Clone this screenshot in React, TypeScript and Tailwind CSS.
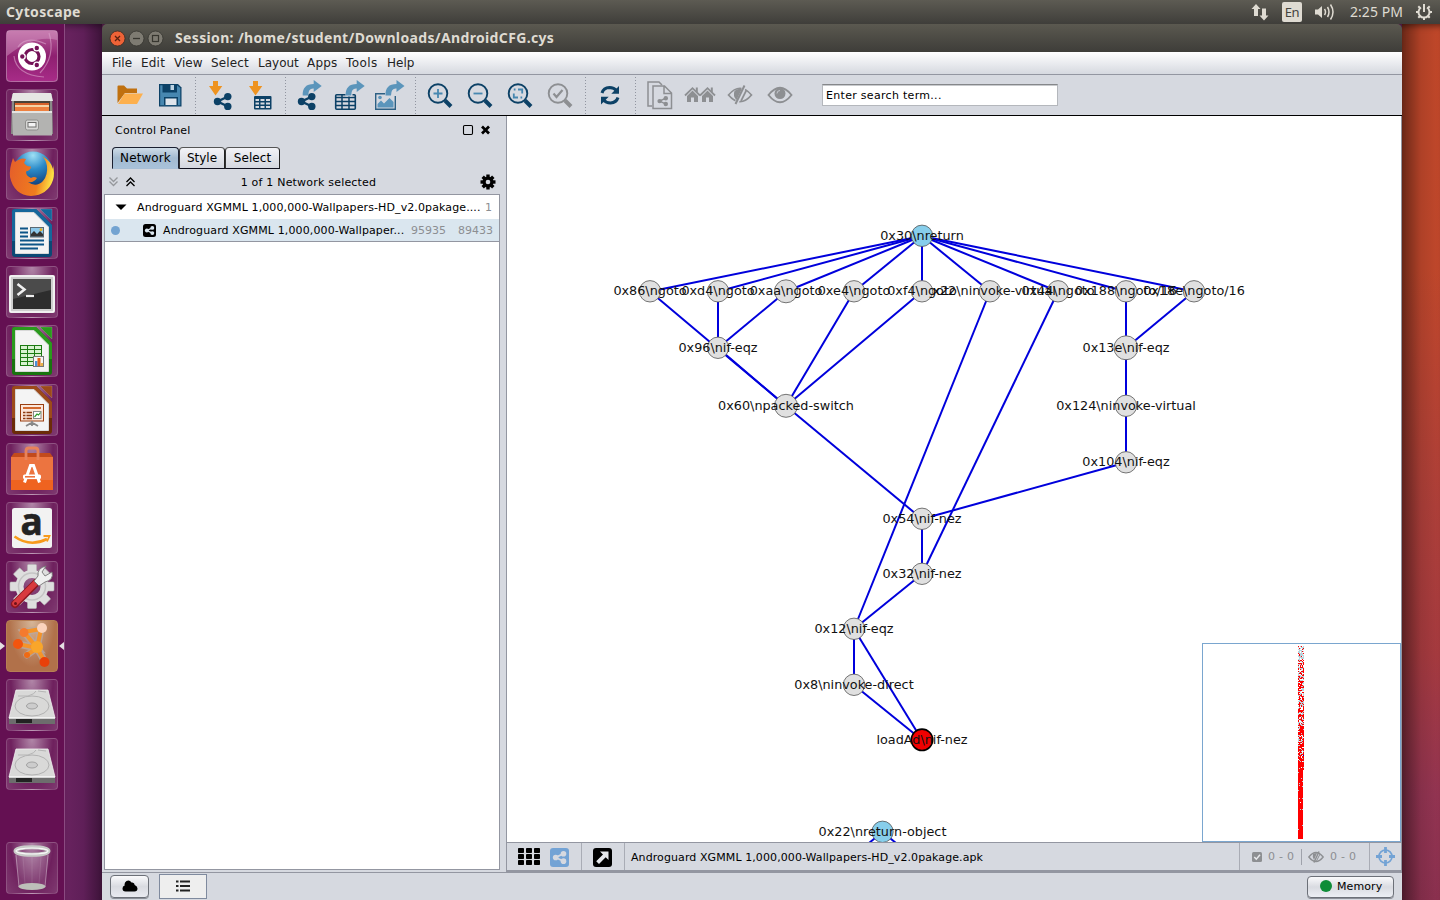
import React from "react";

type Kids = { children?: React.ReactNode };

/* ---------- launcher ---------- */

function Tile({ children, active }: Kids & { active?: boolean }) {
  return (
    <div
      className={
        active
          ? "relative h-[52px] w-[52px] shrink-0 rounded-[4px] border border-[#b67f55] bg-[radial-gradient(ellipse_at_50%_0%,#d6b698_0%,#b1714a_65%)]"
          : "relative h-[52px] w-[52px] shrink-0 rounded-[4px] border border-white/15 bg-[radial-gradient(ellipse_at_50%_0%,rgba(255,255,255,0.5)_0%,rgba(255,255,255,0.07)_60%,rgba(255,255,255,0.18)_100%)]"
      }
    >
      <svg className="absolute -left-px -top-px h-[52px] w-[52px]" viewBox="0 0 52 52">
        {children}
      </svg>
    </div>
  );
}

function UbuntuIcon() {
  return (
    <>
      <defs>
        <linearGradient id="ubg" x1="0" x2="0" y1="0" y2="1">
          <stop offset="0" stopColor="#b9609c" />
          <stop offset="0.5" stopColor="#8e1f70" />
          <stop offset="1" stopColor="#a82c88" />
        </linearGradient>
      </defs>
      <rect x="0.5" y="0.5" width="51" height="51" rx="4" fill="url(#ubg)" stroke="#c58ab5" strokeOpacity="0.6" />
      <path d="M1 1H51V10Q28 4 1 26Z" fill="#dfa9cf" opacity="0.4" />
      <path d="M43 3Q50 26 34 43M8 26Q10 45 38 47M12 17Q20 5 40 14" fill="none" stroke="#dba4cc" strokeWidth="1.2" opacity="0.6" />
      <circle cx="26" cy="26.500" r="14" fill="#fff" />
      <circle cx="26" cy="26.500" r="7" fill="none" stroke="#741157" strokeWidth="3.200" />
      <g stroke="#fff" strokeWidth="1.400" fill="#741157">
        <circle cx="16.300" cy="26.500" r="2.900" />
        <circle cx="30.800" cy="18" r="2.900" />
        <circle cx="30.800" cy="35" r="2.900" />
      </g>
    </>
  );
}

function FilesIcon() {
  return (
    <>
      <path d="M6 5H46L47 45H5Z" fill="#8a8a88" />
      <path d="M7 4H45L47 12H5Z" fill="#e6e6e4" />
      <rect x="8" y="12" width="36" height="10" fill="#4a4238" />
      <rect x="9" y="14" width="34" height="2" fill="#d8612a" />
      <rect x="9" y="16" width="34" height="2" fill="#f6d3a6" />
      <rect x="9" y="18" width="34" height="4" fill="#ee8140" />
      <path d="M6 22H46V46.500H7Z" fill="#b3b3b1" />
      <path d="M6 22H46V24H6Z" fill="#e4e4e2" />
      <rect x="19.500" y="31" width="13" height="10" rx="2" fill="#d8d8d6" stroke="#8e8e8c" />
      <rect x="22" y="33.500" width="8" height="4.500" fill="#f3f3f3" stroke="#6e6e6c" />
    </>
  );
}

function FirefoxIcon() {
  return (
    <>
      <defs>
        <radialGradient id="ffg" cx="0.5" cy="0.1" r="0.9">
          <stop offset="0" stopColor="#9fe0f5" />
          <stop offset="0.4" stopColor="#2b8bc9" />
          <stop offset="1" stopColor="#0a2a66" />
        </radialGradient>
        <linearGradient id="fft" x1="0" x2="1" y1="0.4" y2="0.6">
          <stop offset="0" stopColor="#e5602a" />
          <stop offset="0.65" stopColor="#f07d1e" />
          <stop offset="1" stopColor="#fff04a" />
        </linearGradient>
      </defs>
      <circle cx="27" cy="23" r="19.500" fill="url(#ffg)" />
      <path d="M7 10L9 14Q15 9 20 11L18 15Q21 19 25 18.500Q25 22 20 23.500Q20 28 25 30Q28 28 31 30Q28 35 22 34Q30 40 37 33Q42 27 41 18Q40 12 36 8Q45 13 47 21L47 17Q49 26 47 32Q42 47 25 48Q8 47 4 29Q3 21 7 10Z" fill="url(#fft)" />
    </>
  );
}

function DocIcon({ c, d, kind }: { c: string; d: string; kind: "text" | "calc" | "show" }) {
  return (
    <>
      <path d="M9 2H30L46 18V47Q46 50 43 50H9Q6 50 6 47V5Q6 2 9 2Z" fill={d} />
      <path d="M9 2H30L46 18V34H6V5Q6 2 9 2Z" fill={c} />
      <path d="M34 2H46V14Z" fill={c} stroke="#fff" strokeOpacity="0.25" strokeWidth="0.6" />
      <path d="M9.500 5.500H28L42.500 20V46.500H9.500Z" fill="#f4f4f4" stroke="#d8d8d8" />
      {kind === "text" && (
        <>
          <path d="M14 21.500H22M14 25.500H22M14 29.500H22M14 33.500H38M14 37.500H38M14 41.500H32" stroke="#0d5487" strokeWidth="1.800" />
          <rect x="24.500" y="20.500" width="13" height="9.500" fill="#8cc8ea" stroke="#5a6a74" />
          <path d="M25 29.500V27L28 24L31 27L34 24L37 27V29.500Z" fill="#333" />
          <circle cx="35" cy="22.700" r="1.400" fill="#e8b01c" />
        </>
      )}
      {kind === "calc" && (
        <>
          <rect x="14.500" y="20.500" width="21" height="20" fill="#d8f2d0" stroke="#1c7a12" />
          <path d="M14 24.500H36M14 28.500H36M14 32.500H36M14 36.500H36M21.500 20V41M28.500 20V41" stroke="#1c7a12" />
          <rect x="27.500" y="31.500" width="10" height="10" fill="#f6f6f6" stroke="#777" />
          <path d="M29 41V36H31.500V41Z" fill="#4a90d9" />
          <path d="M31.500 41V33H34.500V41Z" fill="#e2661a" />
          <path d="M34.500 41V38H37V41Z" fill="#eab04a" />
        </>
      )}
      {kind === "show" && (
        <>
          <rect x="14.500" y="20.500" width="23" height="16.500" fill="#fbe6da" stroke="#9a3e10" />
          <path d="M17 24H35" stroke="#d2692f" strokeWidth="2" />
          <path d="M17 28.500H26M17 31.500H26M17 34.500H26" stroke="#8c3a10" strokeWidth="1.600" strokeDasharray="2.500 1 10" />
          <rect x="27.500" y="27.500" width="7.500" height="7" fill="#fff" stroke="#888" />
          <path d="M28.500 33L31 30L32.500 31L34.500 28.500" fill="none" stroke="#2f9a2f" strokeWidth="1.200" />
          <path d="M20 42L26 38.500L32 42M26 37V42" fill="none" stroke="#888" strokeWidth="1.800" />
        </>
      )}
    </>
  );
}

function TerminalIcon() {
  return (
    <>
      <rect x="3" y="9" width="46" height="38" rx="2" fill="#cfcfcf" />
      <rect x="4" y="10" width="44" height="36" rx="1.500" fill="none" stroke="#fbfbfb" strokeWidth="1.500" />
      <rect x="7" y="13" width="38" height="30" fill="#2d2d2d" />
      <path d="M7 13H45V24L7 33Z" fill="#4b4b4b" />
      <path d="M11.500 18L18.500 23.500L11.500 29" fill="none" stroke="#efefef" strokeWidth="2.500" />
      <path d="M20 30H28" stroke="#efefef" strokeWidth="2.200" />
    </>
  );
}

function SoftwareIcon() {
  return (
    <>
      <path d="M5 14L8 10H44L47 14V20H5Z" fill="#c24a1c" />
      <rect x="5" y="14" width="42" height="33" fill="#ec7440" />
      <rect x="5" y="37" width="42" height="10" fill="#ef6320" />
      <path d="M20 17V8Q20 5 23 5H29Q32 5 32 8V17" fill="none" stroke="#e8825a" strokeWidth="2.800" />
      <path d="M18.500 39.500L24.500 22.500H27.500L33.500 39.500" fill="none" stroke="#fff" strokeWidth="3" />
      <rect x="17" y="31.500" width="18" height="4.500" rx="1.500" fill="#fff" />
      <path d="M19 33.800H29" stroke="#ec6b34" strokeWidth="1.500" />
    </>
  );
}

function AmazonIcon() {
  return (
    <>
      <rect x="6" y="6" width="40" height="40" rx="2.500" fill="#f2f2f2" />
      <text x="25.700" y="33" textAnchor="middle" className="font-['Open_Sans',sans-serif] text-[37px] font-bold" fill="#222" stroke="#222" strokeWidth="0.600">
        a
      </text>
      <path d="M8.500 34.500Q24 45.500 41 37" fill="none" stroke="#f79a1c" strokeWidth="2.600" />
      <path d="M37.500 34L43.500 34L41 39.500" fill="none" stroke="#f79a1c" strokeWidth="1.800" />
    </>
  );
}

function SettingsIcon() {
  return (
    <>
      <g fill="#dedede" stroke="#b6b6b6" strokeWidth="0.600">
        {[0, 45, 90, 135, 180, 225, 270, 315].map((a) => (
          <rect key={a} x="21.500" y="3.500" width="9" height="12" rx="1" transform={`rotate(${a} 26 25.500)`} />
        ))}
      </g>
      <circle cx="26" cy="25.500" r="12.500" fill="none" stroke="#dedede" strokeWidth="8" />
      <circle cx="26" cy="25.500" r="13.500" fill="none" stroke="#c4c4c4" strokeWidth="1.500" />
      <path d="M9 43L30 22" stroke="#8e1620" strokeWidth="8" strokeLinecap="round" />
      <path d="M9 42.500L29.500 22" stroke="#d83a3e" strokeWidth="5.500" strokeLinecap="round" />
      <path d="M28 20L32 15Q31 7 40 5L36 11L39 15L46 11Q48 19 39 21L33 25Z" fill="#efefef" stroke="#777" strokeWidth="0.900" />
      <circle cx="9.500" cy="42.500" r="1.500" fill="#6d1018" />
    </>
  );
}

function CytoscapeIcon() {
  return (
    <>
      <g stroke="#b9a8a0" strokeOpacity="0.8" strokeWidth="7" fill="none" strokeLinecap="round">
        <path d="M12 24L31 28L18 12L35 9L31 28L39 42M31 28L21 35" />
      </g>
      <g stroke="#f4942a" strokeWidth="4" fill="none" strokeLinecap="round">
        <path d="M12 24L31 28L18 12L35 9L31 28L39 42M31 28L21 35" />
      </g>
      <circle cx="36" cy="8" r="5" fill="#fbd3bd" />
      <circle cx="18" cy="12.500" r="4.500" fill="#f47a2e" />
      <circle cx="12" cy="24" r="5" fill="#f2550f" />
      <circle cx="31" cy="27" r="6" fill="#f9a62a" />
      <circle cx="21" cy="35" r="3" fill="#ef6a14" />
      <circle cx="38.500" cy="42" r="5" fill="#e8400a" />
    </>
  );
}

function DiskIcon() {
  return (
    <>
      <path d="M10 11H42L49 39H3Z" fill="#d9d9d8" stroke="#f2f2f2" strokeWidth="0.800" />
      <path d="M3 39H49V45H3Z" fill="#6d6d6d" />
      <path d="M10 40H26V44H10Z" fill="#222" />
      <path d="M3 39H49" stroke="#f6f6f6" strokeWidth="1.500" />
      <ellipse cx="26" cy="27" rx="17" ry="10" fill="none" stroke="#b2b2b2" />
      <ellipse cx="26" cy="27" rx="5.500" ry="3" fill="#ccc" stroke="#a2a2a2" />
      <path d="M12 17L22 17Q29 15 30 12M32 12L40 13" fill="none" stroke="#b5b5b5" />
    </>
  );
}

function TrashIcon() {
  return (
    <>
      <path d="M9 11L13 46H39L43 11Z" fill="#fff" fillOpacity="0.12" />
      <path d="M10 13L13 45M42 13L39 45" stroke="#fff" strokeOpacity="0.35" />
      <path d="M17 15L19 42M35 15L33 42M26 15V42" stroke="#fff" strokeOpacity="0.1" />
      <ellipse cx="26" cy="44.500" rx="13.500" ry="3.500" fill="#bdbfb9" />
      <ellipse cx="26" cy="9" rx="16.500" ry="3.800" fill="none" stroke="#c9cbc8" strokeWidth="4" />
      <ellipse cx="26" cy="9" rx="16" ry="3" fill="none" stroke="#f8f8f8" strokeWidth="1.200" />
    </>
  );
}

function Launcher() {
  return (
    <aside className="relative flex w-[65px] shrink-0 flex-col items-start gap-[7px] border-r border-[#8b4b81] bg-[#641052] pl-[6px] pt-[6px]">
      <Tile><UbuntuIcon /></Tile>
      <Tile><FilesIcon /></Tile>
      <Tile><FirefoxIcon /></Tile>
      <Tile><DocIcon c="#15679b" d="#0b4874" kind="text" /></Tile>
      <Tile><TerminalIcon /></Tile>
      <Tile><DocIcon c="#2a9a1d" d="#18740f" kind="calc" /></Tile>
      <Tile><DocIcon c="#9c4a1a" d="#6b2b08" kind="show" /></Tile>
      <Tile><SoftwareIcon /></Tile>
      <Tile><AmazonIcon /></Tile>
      <Tile><SettingsIcon /></Tile>
      <Tile active><CytoscapeIcon /></Tile>
      <Tile><DiskIcon /></Tile>
      <Tile><DiskIcon /></Tile>
      <div className="mt-[45px]">
        <Tile><TrashIcon /></Tile>
      </div>
      <svg className="absolute left-0 top-[616px] h-[12px] w-[64px]" viewBox="0 0 64 12">
        <path d="M0 2L5 6L0 10ZM64 2L59 6L64 10Z" fill="#e4dfe2" />
      </svg>
    </aside>
  );
}

/* ---------- top bar ---------- */

function TopBar() {
  return (
    <header className="flex h-6 items-center justify-between bg-gradient-to-b from-[#5d5b53] to-[#3f3e3a] pl-[6px] pr-[7px] font-['Noto_Sans','Open_Sans',sans-serif] text-[#dfdbd2]">
      <span className="text-[14px] font-bold leading-6 tracking-[0.35px]">Cytoscape</span>
      <div className="flex items-center">
        <svg className="h-[18px] w-[18px]" viewBox="0 0 18 18" fill="#dfdbd2">
          <path d="M5 1L9.500 6H7V13H3V6H0.500ZM13 17.500L8.500 12.500H11V5.500H15V12.500H17.500Z" />
        </svg>
        <span className="ml-[13px] flex h-5 w-5 items-center justify-center rounded-[2px] bg-[#dfdbd2] text-[13px] leading-5 tracking-[-0.4px] text-[#45443f]">En</span>
        <svg className="ml-[12px] h-[18px] w-[22px]" viewBox="0 0 22 18">
          <path d="M1 6.500H4L8 3V15L4 11.500H1Z" fill="#dfdbd2" />
          <path d="M10.500 6Q12.500 9 10.500 12M13.500 4Q16.500 9 13.500 14M16.500 1.500Q21.500 9 16.500 16.500" fill="none" stroke="#dfdbd2" strokeWidth="1.500" />
        </svg>
        <span className="ml-[14px] w-[54px] whitespace-nowrap text-[14px] leading-6 tracking-[0.05px]">2:25 PM</span>
        <svg className="ml-[11px] h-[18px] w-[18px]" viewBox="0 0 18 18" fill="none" stroke="#dfdbd2">
          <path d="M6 4.500A5.500 5.500 0 1 0 12 4.500" strokeWidth="2" />
          <path d="M9 1V9" strokeWidth="2" />
          <path d="M1 9H3.500M14.500 9H17M9 14.500V17M3.300 3.300L5 5M14.700 3.300L13 5M3.300 14.700L5 13M14.700 14.700L13 13" strokeWidth="2" />
        </svg>
      </div>
    </header>
  );
}

/* ---------- window chrome ---------- */

function TitleBar() {
  return (
    <div className="flex h-7 items-center rounded-t-[5px] bg-gradient-to-b from-[#5b5950] to-[#3e3d39] pl-[7px]">
      <svg className="h-[18px] w-[56px]" viewBox="0 0 56 18">
        <circle cx="8.500" cy="9.500" r="7.500" fill="#ee6337" stroke="#3a2a22" strokeWidth="0.800" />
        <path d="M6 7L11 12M11 7L6 12" stroke="#5a2110" strokeWidth="1.300" />
        <circle cx="27.500" cy="9.500" r="7.500" fill="#7e7b72" stroke="#35342f" strokeWidth="0.800" />
        <path d="M24 9.500H31" stroke="#37362f" strokeWidth="1.300" />
        <circle cx="46.500" cy="9.500" r="7.500" fill="#7e7b72" stroke="#35342f" strokeWidth="0.800" />
        <rect x="43.500" y="6.500" width="6" height="6" fill="none" stroke="#37362f" strokeWidth="1.200" />
      </svg>
      <span className="ml-[10px] whitespace-nowrap font-['Noto_Sans','Open_Sans',sans-serif] text-[14px] font-bold leading-7 tracking-[0.35px] text-[#dfdbd2]">
        Session: /home/student/Downloads/AndroidCFG.cys
      </span>
    </div>
  );
}

function MenuBar() {
  return (
    <nav className="flex h-[23px] items-center border-b border-[#9396a1] bg-gradient-to-b from-white to-[#d6d9e0] pl-[10px] text-[12px] leading-[22px] text-[#222]">
      <span className="w-[29px]">File</span>
      <span className="w-[33px] tracking-[0.200px]">Edit</span>
      <span className="w-[37px]">View</span>
      <span className="w-[47px] tracking-[0.150px]">Select</span>
      <span className="w-[49px]">Layout</span>
      <span className="w-[39px] tracking-[0.200px]">Apps</span>
      <span className="w-[41px] tracking-[0.450px]">Tools</span>
      <span>Help</span>
    </nav>
  );
}

function Tool({ children }: Kids) {
  return (
    <svg className="h-10 w-10 shrink-0" viewBox="0 0 40 40">
      {children}
    </svg>
  );
}

function Sep() {
  return (
    <svg className="h-10 w-[10px] shrink-0" viewBox="0 0 10 40">
      <path d="M5.500 2V39" stroke="#9195a0" strokeDasharray="1 2" />
    </svg>
  );
}

function ShareShape({ x, y, s = 1, c }: { x: number; y: number; s?: number; c: string }) {
  return (
    <g transform={`translate(${x} ${y}) scale(${s})`} fill={c} stroke={c}>
      <path d="M14 3.500L3.500 8.500L14 13.500" fill="none" strokeWidth="2.400" />
      <circle cx="3.500" cy="8.500" r="3.700" strokeWidth="0" />
      <circle cx="13.800" cy="3.600" r="3.700" strokeWidth="0" />
      <circle cx="13.800" cy="13.400" r="3.700" strokeWidth="0" />
    </g>
  );
}

function DownArrow() {
  return <path d="M13 6H18V11H22.300L15.500 20.500L9 11H13Z" fill="#ee9320" />;
}

function CurveArrow({ x }: { x: number }) {
  return <path transform={`translate(${x} 0)`} d="M13 20.500Q12.500 9 24 9V5L32 11L24 17V13.500Q18.500 13 18.500 20.500Z" fill="#5b95bb" />;
}

function Lens({ c, children }: Kids & { c: string }) {
  return (
    <Tool>
      <circle cx="18" cy="18.500" r="9.300" fill="none" stroke={c} strokeWidth="1.900" />
      <path d="M25 25.500L31 31.500" stroke={c} strokeWidth="4" />
      {children}
    </Tool>
  );
}

function House({ x }: { x: number }) {
  return (
    <g transform={`translate(${x} 0)`}>
      <path d="M2.500 21L8 15.500L13.500 21V27H9.500V22.500H6.500V27H2.500Z" fill="#8d8f92" />
      <path d="M0.500 20.500L8 13.200L15.500 20.500" fill="none" stroke="#8d8f92" strokeWidth="1.800" />
      <path d="M11.300 12.500H13.300V17H11.300Z" fill="#8d8f92" />
    </g>
  );
}

const NAVY = "#0c4166";
const DIM = "#8d8f92";

function ToolBar() {
  return (
    <div className="flex h-[41px] items-start border-b border-black bg-[#d6d9e0] pl-2">
      <Tool>
        <path d="M7.500 28V11.500Q7.500 10.500 8.500 10.500H14L17 13.500H27V18H15Z" fill="#c0700f" />
        <path d="M14.500 18.500H33L27 29H8Z" fill="#fdb04e" />
      </Tool>
      <Tool>
        <path d="M9 9H28L31.500 12.500V31.500H9Z" fill={NAVY} />
        <path d="M10.200 10.200H12.500V17.500H27V10.200L30.300 13V30.300H10.200Z" fill="#4787b0" />
        <rect x="13.500" y="9" width="13" height="7.500" fill={NAVY} />
        <rect x="20.500" y="10" width="3.500" height="5" fill="#bcd2e2" />
        <rect x="14" y="22" width="14" height="8" fill={NAVY} />
        <rect x="15.500" y="23.500" width="11" height="6.500" fill="#dfe5ec" />
      </Tool>
      <Sep />
      <Tool><DownArrow /><ShareShape x={14} y={18} c={NAVY} /></Tool>
      <Tool>
        <DownArrow />
        <rect x="14" y="21" width="17.500" height="13.500" rx="1" fill={NAVY} />
        <path d="M15.500 24H19V26H15.500ZM20.500 24H24.500V26H20.500ZM26 24H30V26H26ZM15.500 27.500H19V29.500H15.500ZM20.500 27.500H24.500V29.500H20.500ZM26 27.500H30V29.500H26ZM15.500 31H19V33H15.500ZM20.500 31H24.500V33H20.500ZM26 31H30V33H26Z" fill="#d6d9e0" />
      </Tool>
      <Sep />
      <Tool><CurveArrow x={-0.300} /><ShareShape x={8} y={18} c={NAVY} /></Tool>
      <Tool>
        <rect x="5.700" y="19.700" width="19.600" height="14.600" rx="1" fill="none" stroke={NAVY} strokeWidth="1.600" />
        <path d="M5.500 22.500H25.500M5.500 26.500H25.500M5.500 30.500H25.500M12 19V34M19 19V34" stroke={NAVY} strokeWidth="1.500" />
        <path d="M15.500 17H22.500V21.500H15.500Z" fill="#d6d9e0" />
        <CurveArrow x={2.700} />
      </Tool>
      <Tool>
        <path d="M15 18.700H5.700V34.300H25.300V21" fill="none" stroke="#2d6084" strokeWidth="1.400" />
        <path d="M7.500 32.500V29L11 25.500L14 28.500L19.500 23L23.500 27V32.500Z" fill="#5b95bb" />
        <circle cx="10" cy="22.500" r="1.800" fill="#5b95bb" />
        <CurveArrow x={2.500} />
      </Tool>
      <Sep />
      <Lens c={NAVY}><path d="M13.500 18.500H22.500M18 14V23" stroke="#4787b0" strokeWidth="1.800" /></Lens>
      <Lens c={NAVY}><path d="M13.500 18.500H22.500" stroke="#4787b0" strokeWidth="1.800" /></Lens>
      <Lens c={NAVY}><path d="M18 14.500H22.200V18.500M18 22.500H13.800V18.500M15.500 14.500H13.800M22.200 22.500H20.500" fill="none" stroke="#4787b0" strokeWidth="1.800" /></Lens>
      <Lens c={DIM}><path d="M13.500 18.500L16.500 22L22.500 15" fill="none" stroke={DIM} strokeWidth="2.200" /></Lens>
      <Sep />
      <Tool>
        <path d="M12 18Q13.500 12.800 19.500 12.500Q24 12.500 27 16M28 22.500Q26.500 27.500 20.500 28Q16 28 13 24.500" fill="none" stroke={NAVY} strokeWidth="3" />
        <path d="M29 11V18.700H21.300ZM11 29.500V21.800H18.700Z" fill={NAVY} />
      </Tool>
      <Sep />
      <Tool>
        <path d="M12 31H8V7H19L22 10" fill="none" stroke={DIM} strokeWidth="1.500" />
        <path d="M13 11H24.500L31.500 18V33.500H13ZM24 11V18.500H31.500" fill="#d6d9e0" stroke={DIM} strokeWidth="1.500" />
        <ShareShape x={17.500} y={21} s={0.600} c={DIM} />
      </Tool>
      <Tool><House x={4.500} /><House x={19.500} /></Tool>
      <Tool>
        <path d="M8.500 20Q20 6.500 31.500 20Q20 33.500 8.500 20Z" fill="none" stroke={DIM} strokeWidth="1.700" />
        <path d="M25 10L16 29" stroke="#d6d9e0" strokeWidth="4" />
        <path d="M14.500 16Q17 13.500 22 13.500L16.500 25Q12.500 21 14.500 16Z" fill={DIM} />
        <path d="M24.500 10.500L15.500 29" stroke={DIM} strokeWidth="2" />
        <path d="M26.500 15L21 26" stroke={DIM} strokeWidth="1.700" />
      </Tool>
      <Tool>
        <path d="M8.500 20Q20 5.500 31.500 20Q20 34.500 8.500 20Z" fill="none" stroke={DIM} strokeWidth="1.900" />
        <circle cx="20" cy="18.500" r="5.500" fill={DIM} />
        <path d="M17 18.500Q17 15.500 20 15.500" fill="none" stroke="#c5c8cf" />
      </Tool>
      <div className="ml-[22px] mt-[9px] h-[22px] w-[236px] border border-[#b4b7bc] border-t-[#85878a] bg-white pl-[3px] text-[11px] leading-[21px] tracking-[0.3px] text-black shadow-[inset_0_1px_0_#c8cacd]">
        Enter search term...
      </div>
    </div>
  );
}

/* ---------- control panel ---------- */

function ControlPanel() {
  return (
    <section className="flex w-[405px] shrink-0 flex-col border-r border-[#9396a1] bg-[#d6d9e0] text-[11px]">
      <div className="flex h-[31px] items-center pb-[2px] pl-[13px] pr-[15px]">
        <span className="grow leading-7 tracking-[0.2px]">Control Panel</span>
        <svg className="-mt-px h-[14px] w-[30px]" viewBox="0 0 30 14">
          <rect x="2.500" y="2.500" width="9" height="9" rx="1.200" fill="none" stroke="#000" strokeWidth="1.100" />
          <path d="M21 3.500L28 10.500M28 3.500L21 10.500" stroke="#000" strokeWidth="2.700" />
        </svg>
      </div>
      <div className="flex h-[22px] items-stretch pl-[10px] text-[12px] leading-[21px]">
        <div className="w-[67px] rounded-t-[4px] border border-[#1a1f30] border-b-[#a8bfd6] bg-gradient-to-b from-[#cfdce8] via-[#a3bad0] to-[#a8c2da] text-center tracking-[0.1px]">Network</div>
        <div className="w-[46px] rounded-t-[4px] border border-b-[#10101e] border-l-[#333] border-r-[#222] border-t-[#555] bg-gradient-to-b from-[#f3f3f7] to-[#d4d7df] text-center">Style</div>
        <div className="w-[55px] rounded-t-[4px] border border-b-[#10101e] border-l-[#333] border-r-[#222] border-t-[#555] bg-gradient-to-b from-[#f3f3f7] to-[#d4d7df] text-center tracking-[0.1px]">Select</div>
      </div>
      <div className="flex h-[25px] items-center pl-[6px] pr-[10px]">
        <svg className="h-[12px] w-[30px]" viewBox="0 0 30 12" fill="none" strokeWidth="1.300">
          <path d="M1.500 1.500L5.500 5.500L9.500 1.500M1.500 5.500L5.500 9.500L9.500 5.500" stroke="#95979b" />
          <path d="M18.500 6L22.500 2L26.500 6M18.500 10L22.500 6L26.500 10" stroke="#000" />
        </svg>
        <span className="grow pr-px pt-[3px] text-center tracking-[0.2px]">1 of 1 Network selected</span>
        <svg className="h-4 w-4" viewBox="0 0 16 16">
          {[0, 45, 90, 135].map((a) => (
            <rect key={a} x="6.300" y="0.500" width="3.400" height="15" transform={`rotate(${a} 8 8)`} />
          ))}
          <circle cx="8" cy="8" r="5.500" />
          <circle cx="8" cy="8" r="2.300" fill="#d6d9e0" />
        </svg>
      </div>
      <div className="mb-[2px] ml-[2px] mr-[6px] grow border border-[#9396a1] bg-white">
        <div className="flex h-6 items-center pl-[10px] pr-[7px]">
          <svg className="h-3 w-3" viewBox="0 0 12 12"><path d="M0.500 3.500H11.500L6 9Z" /></svg>
          <span className="ml-[10px] grow whitespace-nowrap pt-[2px] tracking-[0.110px]">Androguard XGMML 1,000,000-Wallpapers-HD_v2.0pakage....</span>
          <span className="pt-[2px] text-[#8c8e92]">1</span>
        </div>
        <div className="flex h-[23px] items-center border-b border-[#9396a1] bg-[#dae6ef] pl-[6px] pr-[6px]">
          <span className="h-[9px] w-[9px] rounded-full bg-[#73a3d1]" />
          <svg className="ml-[23px] h-[13px] w-[13px]" viewBox="0 0 13 13">
            <rect width="13" height="13" rx="2.500" />
            <ShareShape x={2} y={2} s={0.530} c="#dae6ef" />
          </svg>
          <span className="ml-[7px] w-[248px] whitespace-nowrap pt-[2px] tracking-[0.120px]">Androguard XGMML 1,000,000-Wallpaper...</span>
          <span className="w-[47px] pt-[2px] text-[#8c8e92]">95935</span>
          <span className="pt-[2px] text-[#8c8e92]">89433</span>
        </div>
      </div>
    </section>
  );
}

/* ---------- network view ---------- */

type Node = { x: number; y: number; label: string; fill?: string; r?: number };

const nodes: Record<string, Node> = {
  a18e: { x: 1194, y: 291.5, label: "0x18e\\ngoto/16" },
  a188: { x: 1126, y: 291.5, label: "0x188\\ngoto/16" },
  a44: { x: 1058, y: 291.5, label: "0x44\\ngoto" },
  a22: { x: 990, y: 291.5, label: "0x22\\ninvoke-virtual" },
  af4: { x: 922, y: 291.5, label: "0xf4\\ngoto" },
  ae4: { x: 854, y: 291.5, label: "0xe4\\ngoto" },
  aaa: { x: 786, y: 291.5, label: "0xaa\\ngoto", r: 11.5 },
  ad4: { x: 718, y: 291.5, label: "0xd4\\ngoto" },
  a86: { x: 650, y: 291.5, label: "0x86\\ngoto" },
  a30: { x: 922, y: 236, label: "0x30\\nreturn", fill: "#87ceeb" },
  a96: { x: 718, y: 348, label: "0x96\\nif-eqz" },
  a60: { x: 786, y: 406, label: "0x60\\npacked-switch", r: 11.5 },
  a13e: { x: 1126, y: 348, label: "0x13e\\nif-eqz", r: 12 },
  a124: { x: 1126, y: 406, label: "0x124\\ninvoke-virtual" },
  a104: { x: 1126, y: 462.5, label: "0x104\\nif-eqz" },
  a54: { x: 922, y: 519, label: "0x54\\nif-nez" },
  a32: { x: 922, y: 574, label: "0x32\\nif-nez" },
  a12: { x: 854, y: 629, label: "0x12\\nif-eqz" },
  a8: { x: 854, y: 685, label: "0x8\\ninvoke-direct" },
  load: { x: 922, y: 740, label: "loadAd\\nif-nez", fill: "#f00000" },
  ret: { x: 882.5, y: 832, label: "0x22\\nreturn-object", fill: "#87ceeb" },
};

const edges: [string, string][] = [
  ["a30", "a86"], ["a30", "ad4"], ["a30", "aaa"], ["a30", "ae4"], ["a30", "af4"],
  ["a30", "a22"], ["a30", "a44"], ["a30", "a188"], ["a30", "a18e"],
  ["a86", "a60"], ["ad4", "a96"], ["aaa", "a96"], ["a96", "a60"], ["ae4", "a60"], ["af4", "a60"],
  ["a188", "a13e"], ["a18e", "a13e"], ["a13e", "a124"], ["a124", "a104"], ["a104", "a54"],
  ["a60", "a54"], ["a54", "a32"], ["a44", "a32"], ["a32", "a12"], ["a22", "a12"],
  ["a12", "a8"], ["a12", "load"], ["a8", "load"],
];

function Graph() {
  return (
    <svg className="block h-[726px] w-[894px]" viewBox="507 116 894 726">
      <g stroke="#0000dc" strokeWidth="2">
        {edges.map(([a, b]) => (
          <line key={a + b} x1={nodes[a].x} y1={nodes[a].y} x2={nodes[b].x} y2={nodes[b].y} />
        ))}
        <path d="M882.500 832L814 888M882.500 832L951 888" />
      </g>
      {Object.entries(nodes).map(([id, n]) => (
        <g key={id}>
          <circle cx={n.x} cy={n.y - 0.2} r={n.r ?? 10.7} fill={n.fill ?? "#e0e0e0"} stroke={id === "load" ? "#000" : "#555"} strokeWidth={id === "load" ? 1.6 : 0.8} />
          <text x={n.x} y={Math.floor(n.y) + 4.3} textAnchor="middle" className="font-['DejaVu_Sans',sans-serif] text-[12.8px]" fill="#111">
            {n.label}
          </text>
        </g>
      ))}
    </svg>
  );
}

function speckles() {
  const out: { x: number; y: number; c: string }[] = [];
  let seed = 7;
  const rnd = () => {
    seed = (seed * 16807) % 2147483647;
    return seed / 2147483647;
  };
  for (let y = 3; y < 196; y++) {
    const t = (y - 3) / 193;
    const w = t > 0.64 ? 5 : 6;
    for (let x = 0; x < w; x++) {
      const p = rnd();
      const red = t < 0.08 ? 0.25 : t < 0.6 ? 0.42 + t * 0.5 : t < 0.85 ? 0.93 : 0.985;
      if (p < red) out.push({ x: 96 + x, y, c: "#ff0000" });
      else if (p < red + 0.6 * (1 - red)) out.push({ x: 96 + x, y, c: "#b9d3dc" });
      else if (p > 0.997 && t < 0.65) out.push({ x: 96 + x, y, c: "#0000c0" });
    }
  }
  return out;
}

function Overview() {
  return (
    <div className="absolute bottom-0 right-0 h-[199px] w-[199px] border border-[#7aa6cf] bg-white">
      <svg className="-ml-px -mt-px block h-[199px] w-[199px]" viewBox="0 0 199 199" shapeRendering="crispEdges">
        {speckles().map((s, i) => (
          <rect key={i} x={s.x} y={s.y} width="1" height="1" fill={s.c} />
        ))}
      </svg>
    </div>
  );
}

function ViewStatus() {
  return (
    <div className="flex h-[28px] shrink-0 items-stretch border-t border-[#9396a1] bg-[#d6d9e0] text-[11px]">
      <div className="flex w-[75px] items-center border-r border-[#a9acb5] pl-[11px]">
        <svg className="h-[18px] w-[22px]" viewBox="0 0 22 18">
          {[0, 1, 2].map((r) =>
            [0, 1, 2].map((c) => <rect key={`${r}${c}`} x={c * 8} y={r * 6} width="6" height="5" rx="0.800" />)
          )}
        </svg>
        <svg className="ml-[10px] mt-px h-[19px] w-[19px]" viewBox="0 0 19 19">
          <rect width="19" height="19" rx="3" fill="#73a3d5" />
          <ShareShape x={3} y={3} s={0.760} c="#d6d9e0" />
        </svg>
      </div>
      <div className="flex w-[43px] items-center border-r border-[#a9acb5] pl-[11px]">
        <svg className="mt-px h-[19px] w-[19px]" viewBox="0 0 19 19">
          <rect width="19" height="19" rx="3" />
          <path d="M7 3.500H15.500V12L12.700 9.200L6 16L3.200 13.200L10 6.500Z" fill="#e6e8ec" />
        </svg>
      </div>
      <span className="grow whitespace-nowrap pl-[6px] leading-[29px] tracking-[0.090px]">Androguard XGMML 1,000,000-Wallpapers-HD_v2.0pakage.apk</span>
      <div className="flex w-[131px] items-center border-l border-r border-[#a9acb5] pl-[12px] text-[12px] text-[#8c8e92]">
        <svg className="h-[10px] w-[10px]" viewBox="0 0 10 10">
          <rect width="10" height="10" rx="1.500" fill={DIM} />
          <path d="M2.300 5L4.300 7.200L8 2.800" fill="none" stroke="#e8e9ec" strokeWidth="1.500" />
        </svg>
        <span className="ml-[6px] w-[33px] whitespace-nowrap pt-px text-[11px] tracking-[0.250px]">0 - 0</span>
        <span className="h-4 border-l border-[#9fa2ab]" />
        <svg className="ml-[6px] h-[12px] w-[16px]" viewBox="0 0 16 12">
          <path d="M0.800 6Q8 -3 15.200 6Q8 15 0.800 6Z" fill="none" stroke={DIM} strokeWidth="1.300" />
          <path d="M5 3Q7 2 9 2L6 9Q4 6 5 3Z" fill={DIM} />
          <path d="M11 0.500L6 11.500" stroke={DIM} strokeWidth="1.500" />
          <path d="M12 3L8.500 10" stroke={DIM} />
        </svg>
        <span className="ml-[6px] whitespace-nowrap pt-px text-[11px] tracking-[0.250px]">0 - 0</span>
      </div>
      <div className="flex w-[31px] items-center justify-center">
        <svg className="h-[19px] w-[19px]" viewBox="0 0 19 19" fill="none" stroke="#73a3d5">
          <circle cx="9.500" cy="9.500" r="6.500" strokeWidth="1.700" />
          <path d="M9.500 0V6M9.500 13V19M0 9.500H6M13 9.500H19" strokeWidth="2.800" />
        </svg>
      </div>
    </div>
  );
}

function BottomBar() {
  return (
    <footer className="flex h-7 shrink-0 items-center border-t border-[#9396a1] bg-[#d6d9e0] pl-2 pr-2">
      <div className="flex h-[23px] w-[39px] items-center justify-center rounded-[4px] border border-[#6c7078] bg-gradient-to-b from-[#fafafc] via-[#d9dbe1] to-[#e9eaf0] shadow-[0_1px_0_#8c8f98]">
        <svg className="-mt-px h-[12px] w-[16px]" viewBox="0 0 16 12"><path d="M3.500 11.500Q0.500 11.500 0.500 8.500Q0.500 6 2.700 5.500Q2 2.500 4.500 1Q7.500 -0.500 9.500 2.500Q12.500 2 12.700 5Q15.500 6 15.500 8.500Q15.500 11.500 12.500 11.500Z" /></svg>
      </div>
      <div className="ml-[10px] flex h-[25px] w-[48px] items-center justify-center border border-[#7f8a9e] bg-[#eee]">
        <svg className="-mt-px h-[12px] w-[14px]" viewBox="0 0 14 12"><path d="M0 1.500H2.500M4 1.500H14M0 6H2.500M4 6H14M0 10.500H2.500M4 10.500H14" stroke="#222" strokeWidth="1.800" /></svg>
      </div>
      <div className="ml-auto flex h-[22px] w-[87px] items-center rounded-[4px] border border-[#6c7078] bg-gradient-to-b from-[#fafafc] via-[#d9dbe1] to-[#eceef4] pl-[12px] text-[11px] shadow-[0_1px_0_#8c8f98]">
        <span className="-mt-px h-3 w-3 rounded-full bg-[#0f8c38]" />
        <span className="ml-[5px] pt-px tracking-[0.100px]">Memory</span>
      </div>
    </footer>
  );
}

export default function App() {
  return (
    <div className="flex h-[900px] w-[1440px] flex-col overflow-hidden bg-[#66215e]">
      <TopBar />
      <div className="flex h-[876px]">
        <Launcher />
        <div className="w-[37px] shrink-0 bg-gradient-to-r from-[#69235f] via-[#5f1f58] to-[#3d1339] shadow-[inset_0_6px_6px_-4px_rgba(0,0,0,0.4)]" />
        <div className="w-[1300px] shrink-0 bg-[#491a40]">
          <main className="flex h-[876px] flex-col font-['DejaVu_Sans',sans-serif] text-black">
            <TitleBar />
            <MenuBar />
            <ToolBar />
            <div className="flex h-[756px] shrink-0">
              <ControlPanel />
              <div className="flex w-[895px] flex-col border-r border-[#9396a1] bg-[#9396a1]">
                <div className="relative h-[726px] bg-white">
                  <Graph />
                  <Overview />
                </div>
                <ViewStatus />
              </div>
            </div>
            <BottomBar />
          </main>
        </div>
        <div className="flex grow bg-[linear-gradient(180deg,#c2482a_0%,#c2482c_28%,#b0403a_55%,#a83b40_72%,#953553_88%,#8d3150_100%)]">
          <div className="grow bg-gradient-to-r from-black/45 via-black/10 to-transparent shadow-[inset_0_6px_6px_-4px_rgba(0,0,0,0.5)]" />
        </div>
      </div>
    </div>
  );
}
